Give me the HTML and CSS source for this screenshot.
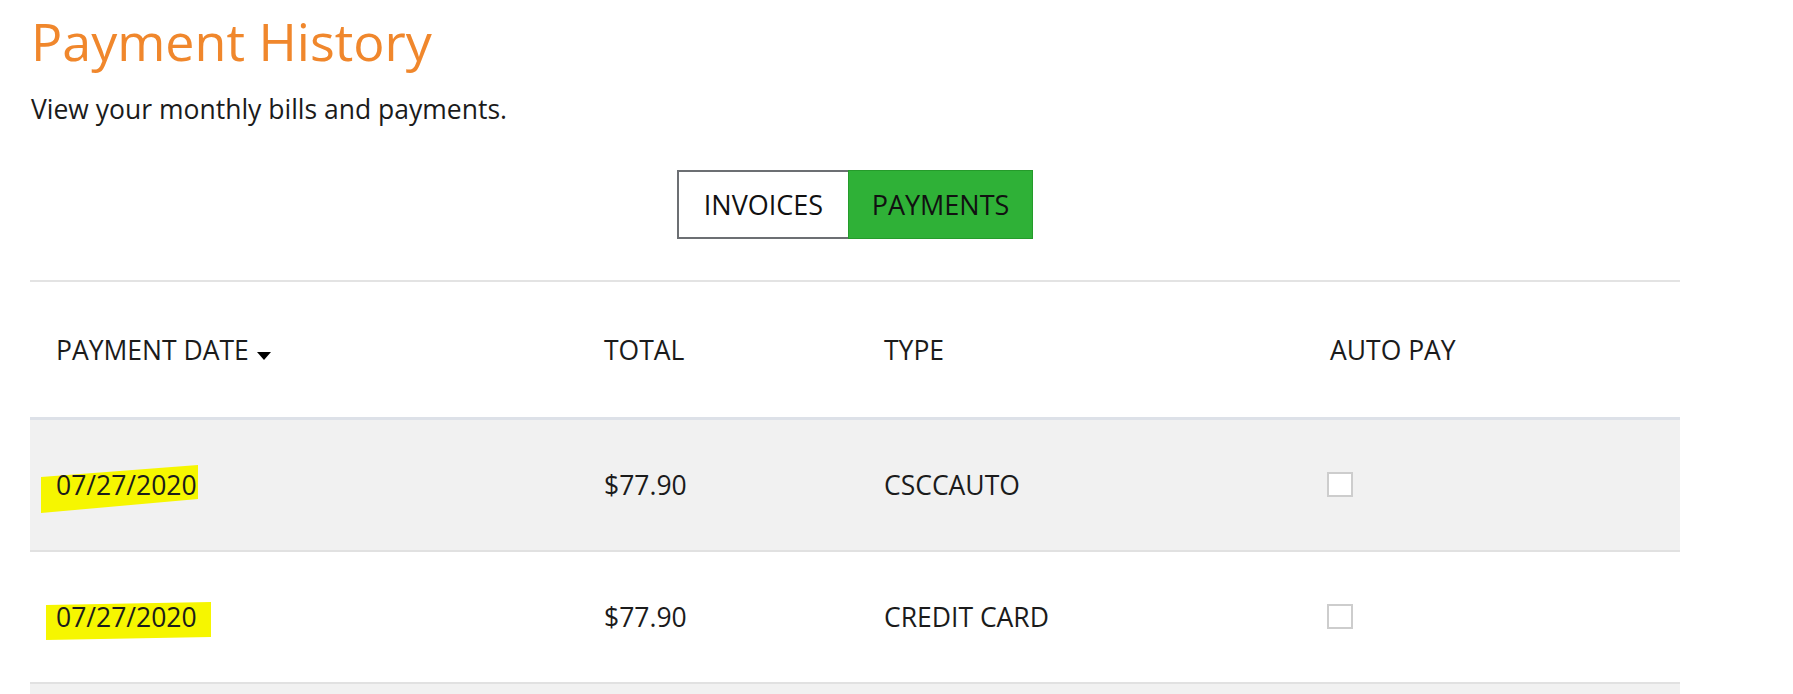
FILE: index.html
```html
<!DOCTYPE html>
<html lang="en">
<head>
<meta charset="utf-8">
<title>Payment History</title>
<link rel="stylesheet" href="styles.css">
</head>
<body>
<main class="page">
  <h1 class="title">Payment History</h1>
  <p class="subtitle">View your monthly bills and payments.</p>

  <div class="toggle-wrap">
    <div class="toggle">
      <button class="toggle-btn">INVOICES</button>
      <button class="toggle-btn active">PAYMENTS</button>
    </div>
  </div>

  <div class="table">
    <div class="row head">
      <div class="cell">PAYMENT DATE<span class="sort"></span></div>
      <div class="cell">TOTAL</div>
      <div class="cell">TYPE</div>
      <div class="cell">AUTO PAY</div>
    </div>
    <div class="row alt">
      <div class="cell date">
        <svg class="hl hl1" viewBox="0 0 157 48" preserveAspectRatio="none"><polygon points="0,12 157,0 157,34 0,48" /></svg>
        <span class="txt">07/27/2020</span>
      </div>
      <div class="cell">$77.90</div>
      <div class="cell">CSCCAUTO</div>
      <div class="cell"><span class="check"></span></div>
    </div>
    <div class="row">
      <div class="cell date">
        <svg class="hl hl2" viewBox="0 0 165 38" preserveAspectRatio="none"><polygon points="0,3 165,0 165,35 0,38" /></svg>
        <span class="txt">07/27/2020</span>
      </div>
      <div class="cell">$77.90</div>
      <div class="cell">CREDIT CARD</div>
      <div class="cell"><span class="check"></span></div>
    </div>
    <div class="row alt"></div>
  </div>
</main>
</body>
</html>
```

FILE: styles.css
```css
* { box-sizing: border-box; }
html, body { margin: 0; padding: 0; background: #fff; }
body {
  font-family: "Open Sans", "Noto Sans", "Liberation Sans", sans-serif;
  color: #1b1b1b;
}
.page {
  width: 1650px;
  margin-left: 30px;
}
.title {
  margin: 0;
  padding-top: 9px;
  padding-left: 1px;
  font-size: 52px;
  font-weight: 400;
  line-height: 64px;
  color: #f0872c;
}
.subtitle {
  margin: 21px 0 0 1px;
  font-size: 26.5px;
  line-height: 30px;
}
.toggle-wrap {
  display: flex;
  justify-content: center;
  margin-top: 46px;
}
.toggle {
  display: flex;
  border: 2px solid #6c6f73;
  height: 69px;
}
.toggle-btn {
  font-family: inherit;
  font-size: 27px;
  color: #111;
  background: #fff;
  border: 0;
  margin: 0;
  padding: 0;
  width: 169px;
}
.toggle-btn.active {
  width: 185px;
  background: #2fb137;
  border: 1px solid #259b2b;
  margin: -2px -2px -2px 0;
}
.table {
  margin-top: 41px;
  border-top: 2px solid #e3e3e3;
}
.row {
  display: grid;
  grid-template-columns: 548px 280px 446px 1fr;
  padding-left: 26px;
  height: 132px;
  align-items: center;
  font-size: 26.5px;
  line-height: 36px;
  border-bottom: 2px solid #e1e1e1;
}
.row.head {
  height: 138px;
  border-bottom: 3px solid #dde1e8;
}
.row.alt { background: #f1f1f1; }
.cell { position: relative; height: 36px; }
.sort {
  display: inline-block;
  width: 0;
  height: 0;
  border-left: 7px solid transparent;
  border-right: 7px solid transparent;
  border-top: 8px solid #000;
  margin-left: 8px;
}
.date .txt { position: relative; }
.hl {
  position: absolute;
  fill: #f6f600;
}
.hl1 { left: -15px; top: -2px; width: 157px; height: 48px; }
.hl2 { left: -10px; top: 3px; width: 165px; height: 38px; }
.check {
  display: block;
  width: 26px;
  height: 25px;
  margin: 5px 0 0 -3px;
  border: 2px solid #cdcdcd;
  background: #fff;
}
```
